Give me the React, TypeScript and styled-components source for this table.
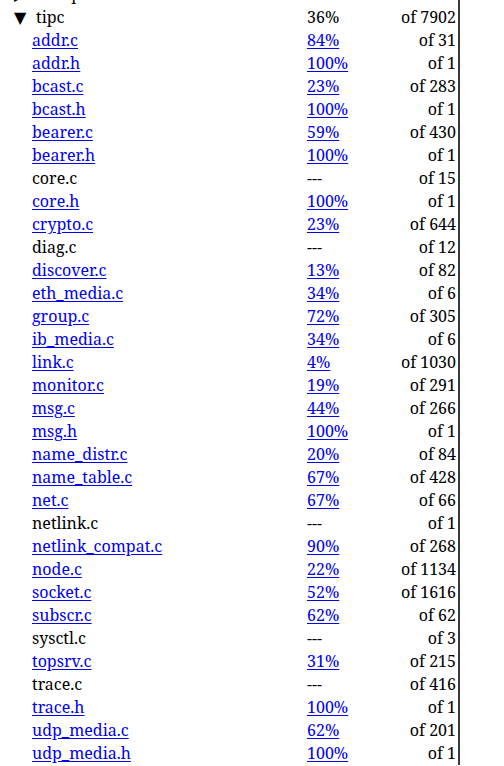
import React from "react";
import styled, { createGlobalStyle } from "styled-components";

const Global = createGlobalStyle`
  html, body { margin: 0; padding: 0; background: #fff; overflow: hidden; }
  body { font-family: "Noto Serif", "DejaVu Serif", serif; font-size: 16px; color: #000; }
`;

type Row = { name: string; pct: string; total: number; dir?: boolean; open?: boolean; level: number };

const rows: Row[] = [
  { name: "sunrpc", pct: "41%", total: 10125, dir: true, level: 1 },
  { name: "tipc", pct: "36%", total: 7902, dir: true, open: true, level: 1 },
  { name: "addr.c", pct: "84%", total: 31, level: 2 },
  { name: "addr.h", pct: "100%", total: 1, level: 2 },
  { name: "bcast.c", pct: "23%", total: 283, level: 2 },
  { name: "bcast.h", pct: "100%", total: 1, level: 2 },
  { name: "bearer.c", pct: "59%", total: 430, level: 2 },
  { name: "bearer.h", pct: "100%", total: 1, level: 2 },
  { name: "core.c", pct: "---", total: 15, level: 2 },
  { name: "core.h", pct: "100%", total: 1, level: 2 },
  { name: "crypto.c", pct: "23%", total: 644, level: 2 },
  { name: "diag.c", pct: "---", total: 12, level: 2 },
  { name: "discover.c", pct: "13%", total: 82, level: 2 },
  { name: "eth_media.c", pct: "34%", total: 6, level: 2 },
  { name: "group.c", pct: "72%", total: 305, level: 2 },
  { name: "ib_media.c", pct: "34%", total: 6, level: 2 },
  { name: "link.c", pct: "4%", total: 1030, level: 2 },
  { name: "monitor.c", pct: "19%", total: 291, level: 2 },
  { name: "msg.c", pct: "44%", total: 266, level: 2 },
  { name: "msg.h", pct: "100%", total: 1, level: 2 },
  { name: "name_distr.c", pct: "20%", total: 84, level: 2 },
  { name: "name_table.c", pct: "67%", total: 428, level: 2 },
  { name: "net.c", pct: "67%", total: 66, level: 2 },
  { name: "netlink.c", pct: "---", total: 1, level: 2 },
  { name: "netlink_compat.c", pct: "90%", total: 268, level: 2 },
  { name: "node.c", pct: "22%", total: 1134, level: 2 },
  { name: "socket.c", pct: "52%", total: 1616, level: 2 },
  { name: "subscr.c", pct: "62%", total: 62, level: 2 },
  { name: "sysctl.c", pct: "---", total: 3, level: 2 },
  { name: "topsrv.c", pct: "31%", total: 215, level: 2 },
  { name: "trace.c", pct: "---", total: 416, level: 2 },
  { name: "trace.h", pct: "100%", total: 1, level: 2 },
  { name: "udp_media.c", pct: "62%", total: 201, level: 2 },
  { name: "udp_media.h", pct: "100%", total: 1, level: 2 },
];

const Panel = styled.div`
  width: 458px;
  min-height: 100vh;
  border-right: 2px solid #3a3a3a;
`;

const List = styled.div`
  margin-top: -17px;
`;

const Line = styled.div`
  display: grid;
  grid-template-columns: 307px 1fr auto;
  height: 23px;
  line-height: 23px;
  padding-right: 2px;
  white-space: nowrap;
`;

const NameCell = styled.div<{ $level: number; $dir?: boolean }>`
  padding-left: ${(p) => (p.$dir ? 14 : 14 + (p.$level - 1) * 18)}px;
`;

const Toggle = styled.span`
  display: inline-block;
  width: 22px;
  font-size: 16px;
`;

const Link = styled.a`
  color: #0000ee;
  text-decoration: underline;
  text-underline-offset: 2px;
`;

const Plain = styled.span`
  color: #000;
`;

const Count = styled.div`
  text-align: right;
`;

export default function App() {
  return (
    <>
      <Global />
      <Panel>
        <List>
          {rows.map((r) => {
            const linked = !r.dir && r.pct !== "---";
            return (
              <Line key={r.name}>
                <NameCell $level={r.level} $dir={r.dir}>
                  {r.dir && <Toggle>{r.open ? "▼" : "▶"}</Toggle>}
                  {linked ? <Link href="#">{r.name}</Link> : <Plain>{r.name}</Plain>}
                </NameCell>
                <div>{linked ? <Link href="#">{r.pct}</Link> : <Plain>{r.pct}</Plain>}</div>
                <Count>of {r.total}</Count>
              </Line>
            );
          })}
        </List>
      </Panel>
    </>
  );
}
